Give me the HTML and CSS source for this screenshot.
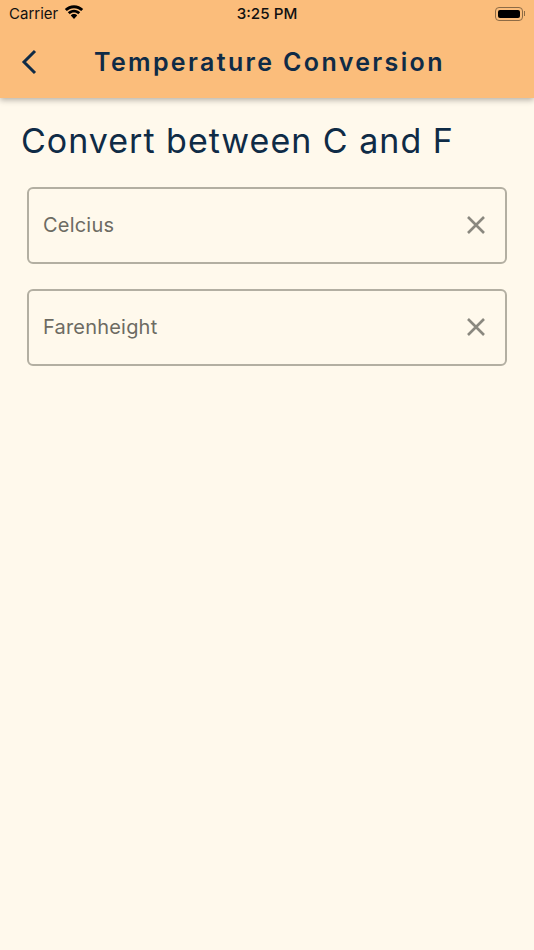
FILE: index.html
```html
<!DOCTYPE html>
<html lang="en">
<head>
<meta charset="UTF-8" />
<meta name="viewport" content="width=device-width, initial-scale=1" />
<title>Temperature Conversion</title>
<link rel="stylesheet" href="styles.css">
</head>

<body>
  <div class="page">
    <header class="app-bar">
      <div class="status-bar">
        <div class="status-left">
          <span>Carrier</span>
          <svg class="wifi" viewBox="0 0 20 15" width="20" height="15">
            <path d="M10 3.200c2.800 0 5.300 1.100 7.200 2.900l2-2.100C16.800 1.600 13.600.2 10 .2S3.200 1.600.8 4l2 2.100C4.700 4.300 7.200 3.200 10 3.200z" />
            <path d="M10 7.600c1.600 0 3.100.6 4.200 1.700l2-2.100C14.500 5.600 12.400 4.700 10 4.700S5.500 5.600 3.800 7.200l2 2.100C6.900 8.200 8.400 7.600 10 7.600z" />
            <path d="M10 9.100c-1.300 0-2.400.5-3.200 1.300L10 14l3.200-3.600c-.8-.8-1.900-1.300-3.200-1.300z" />
          </svg>
        </div>
        <span class="clock">3:25 PM</span>
        <div class="battery">
          <div class="battery-shell"><div class="battery-level"></div></div>
          <div class="battery-tip"></div>
        </div>
      </div>
      <div class="toolbar">
        <svg class="back" viewBox="0 0 16 26" width="16" height="26">
          <path d="M14 2 L3 13 L14 24" />
        </svg>
        <h1>Temperature Conversion</h1>
      </div>
    </header>

    <main>
      <h2>Convert between C and F</h2>
      <div class="fields">
        <div class="field">
          <span>Celcius</span>
          <svg class="clear" viewBox="0 0 20 20" width="20" height="20"><path d="M2 2 L18 18 M18 2 L2 18" /></svg>
        </div>
        <div class="field">
          <span>Farenheight</span>
          <svg class="clear" viewBox="0 0 20 20" width="20" height="20"><path d="M2 2 L18 18 M18 2 L2 18" /></svg>
        </div>
      </div>
    </main>
  </div>
</body>
</html>
```

FILE: styles.css
```css
body {
  margin: 0;
  background: #fff9ec;
  font-family: Inter, "Liberation Sans", sans-serif;
}
.page {
  height: 950px;
  overflow: hidden;
  background: #fff9ec;
}

.app-bar {
  height: 98px;
  background: #fbbd7b;
  box-shadow: 0 2px 6px rgb(0 0 0 / 0.3);
}
.status-bar {
  display: grid;
  grid-template-columns: 1fr auto 1fr;
  align-items: center;
  height: 27px;
  padding: 0 9px;
  font-size: 15px;
  color: #111;
}
.status-left {
  display: flex;
  align-items: center;
  gap: 6px;
}
.wifi {
  fill: #000;
  margin-top: -3px;
}
.clock {
  font-size: 15.2px;
  font-weight: 500;
}
.battery {
  display: flex;
  align-items: center;
  justify-content: flex-end;
  gap: 1px;
}
.battery-shell {
  width: 28px;
  height: 14px;
  box-sizing: border-box;
  padding: 2px;
  border: 1px solid #8d6b45;
  border-radius: 4px;
}
.battery-level {
  height: 100%;
  background: #000;
  border-radius: 2px;
}
.battery-tip {
  width: 1px;
  height: 5px;
  background: #8d6b45;
}

.toolbar {
  display: flex;
  align-items: center;
  height: 70px;
  padding-left: 21px;
}
.back {
  fill: none;
  stroke: #0f2b46;
  stroke-width: 3;
}
.toolbar h1 {
  margin: 0 0 0 57px;
  font-size: 25px;
  font-weight: 600;
  letter-spacing: 2.35px;
  color: #0f2b46;
  white-space: nowrap;
}

main {
  padding: 0 27px 0 21px;
}
main h2 {
  margin: 23px 0 0 0;
  font-size: 34px;
  line-height: 40px;
  font-weight: 400;
  letter-spacing: 1px;
  color: #0f2b46;
  white-space: nowrap;
}

.fields {
  display: flex;
  flex-direction: column;
  gap: 25px;
  margin: 26px 0 0 6px;
}
.field {
  display: flex;
  align-items: center;
  justify-content: space-between;
  height: 77px;
  box-sizing: border-box;
  padding: 0 19px 1px 14px;
  border: 2px solid #b3afa2;
  border-radius: 6px;
  font-size: 20px;
  letter-spacing: 0.2px;
  color: #6d6b63;
}
.clear {
  fill: none;
  stroke: #8a887f;
  stroke-width: 2.6;
}
```
